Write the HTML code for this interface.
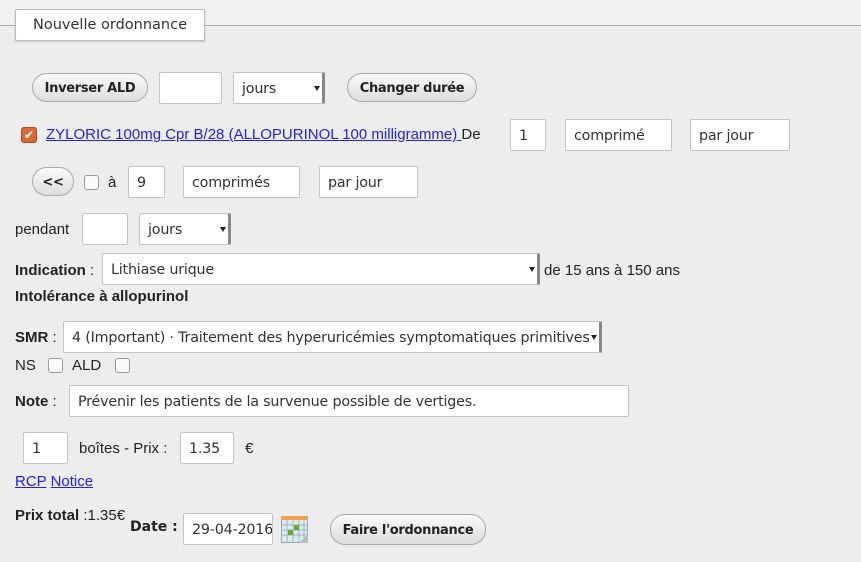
<!DOCTYPE html>
<html><head><meta charset="utf-8"><style>
body{margin:0;width:861px;height:562px;background:#ededed;font-family:"Liberation Sans",sans-serif;font-size:14px;color:#222;position:relative;overflow:hidden}
.a{position:absolute;white-space:nowrap}
.top{position:absolute;left:0;top:0;width:861px;height:25px;background:#f2f2f2;border-bottom:1px solid #aaa}
.tab{position:absolute;left:15px;top:9px;width:188px;height:30px;background:#fff;border:1px solid #bbb;border-radius:2px;box-shadow:0 1px 2px rgba(0,0,0,.15);font:14.5px "DejaVu Sans",sans-serif;line-height:31px;text-align:center;color:#333}
.btn{position:absolute;height:29px;border:1px solid #aaa;border-radius:15px;background:linear-gradient(#fafafa,#ddd);font:bold 13px "DejaVu Sans",sans-serif;line-height:30px;text-align:center;color:#222;box-sizing:border-box;letter-spacing:-0.3px}
.in{position:absolute;height:32px;background:#fff;border:1px solid #c4c4c4;box-sizing:border-box;font:14.3px "DejaVu Sans",sans-serif;line-height:32px;padding-left:8px;color:#333;border-radius:2px;white-space:nowrap;overflow:hidden;letter-spacing:-0.2px}
.sel::after{content:"";position:absolute;right:2px;top:13px;border-left:3px solid transparent;border-right:3px solid transparent;border-top:5px solid #222}
.sel{border-right:3px solid #888}
.cb{position:absolute;width:13px;height:13px;border:1px solid #999;border-radius:3px;background:#fafafa}
a{color:#22e;text-decoration:underline}
b{font-weight:bold}
.l{font-size:15px}
</style></head><body>
<div class="top"></div>
<div class="tab">Nouvelle ordonnance</div>

<div class="btn" style="left:32px;top:73px;width:116px">Inverser ALD</div>
<div class="in" style="left:159px;top:72px;width:63px"></div>
<div class="in sel" style="left:233px;top:72px;width:92px">jours</div>
<div class="btn" style="left:347px;top:73px;width:130px">Changer durée</div>

<div class="a" style="left:21px;top:127px;width:16px;height:16px;background:#d8683c;border-radius:3px;border:1px solid #a84a28;box-sizing:border-box;color:#fff;font-size:12px;line-height:14px;text-align:center">✔</div>
<div class="a l" style="left:46px;top:126px"><a>ZYLORIC 100mg Cpr B/28 (ALLOPURINOL 100 milligramme) </a>De</div>
<div class="in" style="left:510px;top:119px;width:36px">1</div>
<div class="in" style="left:565px;top:119px;width:107px">comprimé</div>
<div class="in" style="left:690px;top:119px;width:100px">par jour</div>

<div class="btn" style="left:32px;top:167px;width:42px">&lt;&lt;</div>
<div class="cb" style="left:84px;top:175px"></div>
<div class="a l" style="left:108px;top:174px">à</div>
<div class="in" style="left:128px;top:166px;width:37px">9</div>
<div class="in" style="left:183px;top:166px;width:117px">comprimés</div>
<div class="in" style="left:319px;top:166px;width:99px">par jour</div>

<div class="a l" style="left:15px;top:221px">pendant</div>
<div class="in" style="left:82px;top:213px;width:46px"></div>
<div class="in sel" style="left:139px;top:213px;width:92px">jours</div>

<div class="a l" style="left:15px;top:262px"><b>Indication</b> :</div>
<div class="in sel" style="left:102px;top:253px;width:438px">Lithiase urique</div>
<div class="a l" style="left:544px;top:262px">de 15 ans à 150 ans</div>
<div class="a l" style="left:15px;top:288px"><b>Intolérance à allopurinol</b></div>

<div class="a l" style="left:15px;top:329px"><b>SMR</b> :</div>
<div class="in sel" style="left:63px;top:321px;width:539px">4 (Important) · Traitement des hyperuricémies symptomatiques primitives</div>
<div class="a l" style="left:15px;top:357px">NS</div>
<div class="cb" style="left:48px;top:358px"></div>
<div class="a l" style="left:72px;top:357px">ALD</div>
<div class="cb" style="left:115px;top:358px"></div>

<div class="a l" style="left:15px;top:393px"><b>Note</b> :</div>
<div class="in" style="left:69px;top:385px;width:560px">Prévenir les patients de la survenue possible de vertiges.</div>

<div class="in" style="left:23px;top:432px;width:45px">1</div>
<div class="a l" style="left:79px;top:440px">boîtes - Prix :</div>
<div class="in" style="left:180px;top:432px;width:54px">1.35</div>
<div class="a l" style="left:245px;top:440px">€</div>

<div class="a l" style="left:15px;top:473px"><a>RCP</a> <a>Notice</a></div>

<div class="a" style="left:15px;top:507px;font-size:15px"><b>Prix total</b> :1.35€</div>
<div class="a" style="left:130px;top:519px;font:bold 14px 'DejaVu Sans',sans-serif">Date :</div>
<div class="in" style="left:183px;top:513px;width:90px">29-04-2016</div>
<svg class="a" style="left:281px;top:515px" width="28" height="29" viewBox="0 0 28 29">
<rect x="0.5" y="2.5" width="26" height="25" fill="#dfe9f3" stroke="#8aa"/>
<rect x="0" y="1" width="27" height="4" fill="#f0a050"/>
<g stroke="#9bb" stroke-width="1"><path d="M0 10h27M0 15h27M0 20h27M6 5v22M12 5v22M18 5v22M23 5v22"/></g>
<rect x="13" y="10" width="5" height="5" fill="#6a3"/><rect x="7" y="15" width="5" height="5" fill="#6a3"/>
<path d="M18 28l9-9v9z" fill="#bbb"/></svg>
<div class="btn" style="left:330px;top:514px;width:156px;height:31px;line-height:31px">Faire l'ordonnance</div>
</body></html>
